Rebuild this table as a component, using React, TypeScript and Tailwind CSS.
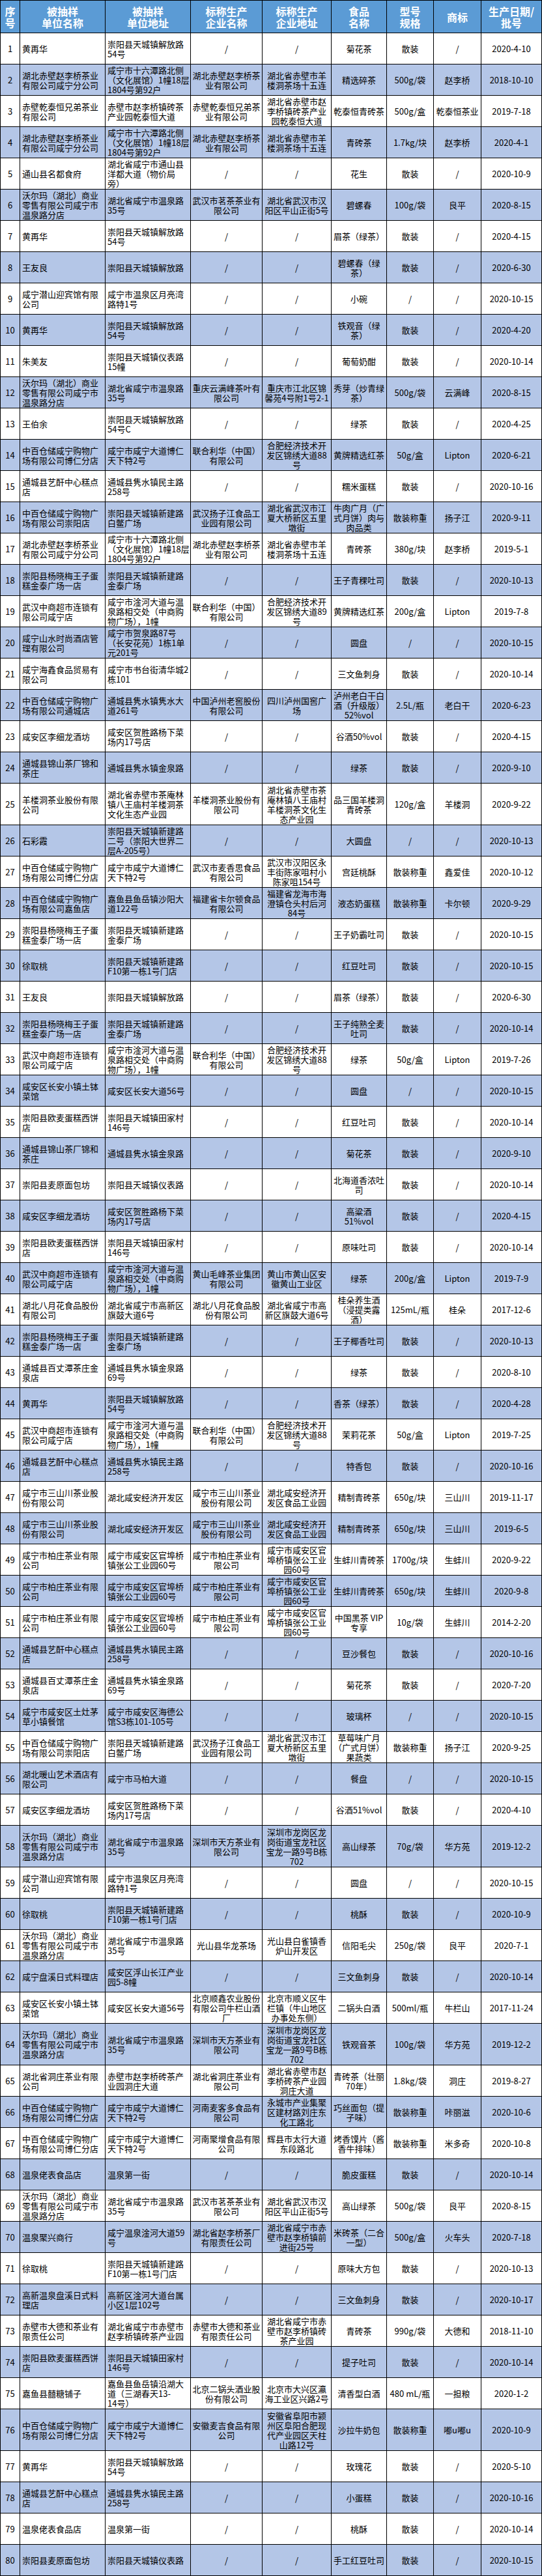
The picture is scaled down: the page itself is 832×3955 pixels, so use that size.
import React from "react";

// 食品抽检结果表：表头 + 80 行，偶数行蓝底
const HEAD = [
  "序~号",
  "被抽样~单位名称",
  "被抽样~单位地址",
  "标称生产~企业名称",
  "标称生产~企业地址",
  "食品~名称",
  "型号~规格",
  "商标",
  "生产日期/~批号",
];

const ROWS = [
  "黄再华|崇阳县天城镇解放路~54号|/|/|菊花茶|散装|/|2020-4-10",
  "湖北赤壁赵李桥茶业~有限公司咸宁分公司|咸宁市十六潭路北侧~（文化展馆）1幢18层~1804号第92户|湖北赤壁赵李桥茶~业有限公司|湖北省赤壁市羊~楼洞茶场十五连|精选碎茶|500g/袋|赵李桥|2018-10-10",
  "赤壁乾泰恒兄弟茶业~有限公司|赤壁市赵李桥镇砖茶~产业园乾泰恒大道|赤壁乾泰恒兄弟茶~业有限公司|湖北省赤壁市赵~李桥镇砖茶产业~园乾泰恒大道|乾泰恒青砖茶|500g/盒|乾泰恒茶业|2019-7-18",
  "湖北赤壁赵李桥茶业~有限公司咸宁分公司|咸宁市十六潭路北侧~（文化展馆）1幢18层~1804号第92户|湖北赤壁赵李桥茶~业有限公司|湖北省赤壁市羊~楼洞茶场十五连|青砖茶|1.7kg/块|赵李桥|2020-4-1",
  "通山县名都食府|湖北省咸宁市通山县~洋都大道（物价局~旁）|/|/|花生|散装|/|2020-10-9",
  "沃尔玛（湖北）商业~零售有限公司咸宁市~温泉路分店|湖北省咸宁市温泉路~35号|武汉市茗茶茶业有~限公司|湖北省武汉市汉~阳区平山正街5号|碧螺春|100g/袋|良平|2020-8-15",
  "黄再华|崇阳县天城镇解放路~54号|/|/|眉茶（绿茶）|散装|/|2020-4-15",
  "王友良|崇阳县天城镇解放路|/|/|碧螺春（绿~茶）|散装|/|2020-6-30",
  "咸宁潜山迎宾馆有限~公司|咸宁市温泉区月亮湾~路特1号|/|/|小碗|/|/|2020-10-15",
  "黄再华|崇阳县天城镇解放路~54号|/|/|铁观音（绿~茶）|散装|/|2020-4-20",
  "朱美友|崇阳县天城镇仪表路~15幢|/|/|葡萄奶酣|散装|/|2020-10-14",
  "沃尔玛（湖北）商业~零售有限公司咸宁市~温泉路分店|湖北省咸宁市温泉路~35号|重庆云满峰茶叶有~限公司|重庆市江北区锦~馨苑4号附1号2-1|秀芽（炒青绿~茶）|500g/袋|云满峰|2020-8-15",
  "王伯余|崇阳县天城镇解放路~54号C|/|/|绿茶|散装|/|2020-4-25",
  "中百仓储咸宁购物广~场有限公司博仁分店|咸宁市咸宁大道博仁~天下特2号|联合利华（中国）~有限公司|合肥经济技术开~发区锦绣大道88~号|黄牌精选红茶|50g/盒|Lipton|2020-6-21",
  "通城县艺酐中心糕点~店|通城县隽水镇民主路~258号|/|/|糯米蛋糕|散装|/|2020-10-16",
  "中百仓储咸宁购物广~场有限公司崇阳店|崇阳县天城镇新建路~白鳖广场|武汉扬子江食品工~业园有限公司|湖北省武汉市江~夏大桥新区五里~墩街|牛肉广月（广~式月饼）肉与~肉品类|散装称重|扬子江|2020-9-11",
  "湖北赤壁赵李桥茶业~有限公司咸宁分公司|咸宁市十六潭路北侧~（文化展馆）1幢18层~1804号第92户|湖北赤壁赵李桥茶~业有限公司|湖北省赤壁市羊~楼洞茶场十五连|青砖茶|380g/块|赵李桥|2019-5-1",
  "崇阳县杨晓梅王子蛋~糕金泰广场一店|崇阳县天城镇新建路~金泰广场|/|/|王子青稞吐司|散装|/|2020-10-13",
  "武汉中商超市连锁有~限公司咸宁店|咸宁市淦河大道与温~泉路相交处（中商购~物广场），1幢|联合利华（中国）~有限公司|合肥经济技术开~发区锦绣大道89~号|黄牌精选红茶|200g/盒|Lipton|2019-7-8",
  "咸宁山水时尚酒店管~理有限公司|咸宁市贺泉路87号~（长安花苑）1栋1单~元201号|/|/|圆盘|/|/|2020-10-15",
  "咸宁海鑫食品贸易有~限公司|咸宁市书台街清华城2~栋101|/|/|三文鱼刺身|散装|/|2020-10-14",
  "中百仓储咸宁购物广~场有限公司通城店|通城县隽水镇隽水大~道261号|中国泸州老窖股份~有限公司|四川泸州国窖广~场|泸州老白干白~酒（升级版）~52%vol|2.5L/瓶|老白干|2020-6-23",
  "咸安区李细龙酒坊|咸安区贺胜路杨下菜~场内17号店|/|/|谷酒50%vol|散装|/|2020-4-15",
  "通城县锦山茶厂锦和~茶庄|通城县隽水镇金泉路|/|/|绿茶|散装|/|2020-9-10",
  "羊楼洞茶业股份有限~公司|湖北省赤壁市茶庵林~镇八王庙村羊楼洞茶~文化生态产业园|羊楼洞茶业股份有~限公司|湖北省赤壁市茶~庵林镇八王庙村~羊楼洞茶文化生~态产业园|品三国羊楼洞~青砖茶|120g/盒|羊楼洞|2020-9-22",
  "石彩霞|崇阳县天城镇新建路~二号（崇阳大世界二~层A-205号）|/|/|大圆盘|/|/|2020-10-13",
  "中百仓储咸宁购物广~场有限公司博仁分店|咸宁市咸宁大道博仁~天下特2号|武汉市麦香思食品~有限公司|武汉市汉阳区永~丰街陈家咀村小~陈家咀154号|宫廷桃酥|散装称重|鑫爱佳|2020-10-12",
  "中百仓储咸宁购物广~场有限公司嘉鱼店|嘉鱼县鱼岳镇沙阳大~道122号|福建省卡尔顿食品~有限公司|福建省龙海市海~澄镇仓头村后河~84号|液态奶蛋糕|散装称重|卡尔顿|2020-9-29",
  "崇阳县杨晓梅王子蛋~糕金泰广场一店|崇阳县天城镇新建路~金泰广场|/|/|王子奶霸吐司|散装|/|2020-10-15",
  "徐取桃|崇阳县天城镇新建路~F10第一栋1号门店|/|/|红豆吐司|散装|/|2020-10-15",
  "王友良|崇阳县天城镇解放路|/|/|眉茶（绿茶）|散装|/|2020-6-30",
  "崇阳县杨晓梅王子蛋~糕金泰广场一店|崇阳县天城镇新建路~金泰广场|/|/|王子纯熟全麦~吐司|散装|/|2020-10-14",
  "武汉中商超市连锁有~限公司咸宁店|咸宁市淦河大道与温~泉路相交处（中商购~物广场），1幢|联合利华（中国）~有限公司|合肥经济技术开~发区锦绣大道88~号|绿茶|50g/盒|Lipton|2019-7-26",
  "咸安区长安小镇土钵~菜馆|咸安区长安大道56号|/|/|圆盘|/|/|2020-10-15",
  "崇阳县欧麦蛋糕西饼~店|崇阳县天城镇田家村~146号|/|/|红豆吐司|散装|/|2020-10-14",
  "通城县锦山茶厂锦和~茶庄|通城县隽水镇金泉路|/|/|菊花茶|散装|/|2020-9-10",
  "崇阳县麦原面包坊|崇阳县天城镇仪表路|/|/|北海道香浓吐~司|散装|/|2020-10-14",
  "咸安区李细龙酒坊|咸安区贺胜路杨下菜~场内17号店|/|/|高粱酒~51%vol|散装|/|2020-4-15",
  "崇阳县欧麦蛋糕西饼~店|崇阳县天城镇田家村~146号|/|/|原味吐司|散装|/|2020-10-14",
  "武汉中商超市连锁有~限公司咸宁店|咸宁市淦河大道与温~泉路相交处（中商购~物广场），1幢|黄山毛峰茶业集团~有限公司|黄山市黄山区安~徽黄山工业区|绿茶|200g/盒|Lipton|2019-7-9",
  "湖北八月花食品股份~有限公司|湖北省咸宁市高新区~旗鼓大道6号|湖北八月花食品股~份有限公司|湖北省咸宁市高~新区旗鼓大道6号|桂朵养生酒~（浸提类露~酒）|125mL/瓶|桂朵|2017-12-6",
  "崇阳县杨晓梅王子蛋~糕金泰广场一店|崇阳县天城镇新建路~金泰广场|/|/|王子椰香吐司|散装|/|2020-10-13",
  "通城县百丈潭茶庄金~泉店|通城县隽水镇金泉路~69号|/|/|绿茶|散装|/|2020-8-10",
  "黄再华|崇阳县天城镇解放路~54号|/|/|香茶（绿茶）|散装|/|2020-4-28",
  "武汉中商超市连锁有~限公司咸宁店|咸宁市淦河大道与温~泉路相交处（中商购~物广场），1幢|联合利华（中国）~有限公司|合肥经济技术开~发区锦绣大道88~号|茉莉花茶|50g/盒|Lipton|2019-7-25",
  "通城县艺酐中心糕点~店|通城县隽水镇民主路~258号|/|/|特香包|散装|/|2020-10-16",
  "咸宁市三山川茶业股~份有限公司|湖北咸安经济开发区|咸宁市三山川茶业~股份有限公司|湖北咸安经济开~发区食品工业园|精制青砖茶|650g/块|三山川|2019-11-17",
  "咸宁市三山川茶业股~份有限公司|湖北咸安经济开发区|咸宁市三山川茶业~股份有限公司|湖北咸安经济开~发区食品工业园|精制青砖茶|650g/块|三山川|2019-6-5",
  "咸宁市柏庄茶业有限~公司|咸宁市咸安区官埠桥~镇张公工业园60号|咸宁市柏庄茶业有~限公司|咸宁市咸安区官~埠桥镇张公工业~园60号|生蚌川青砖茶|1700g/块|生蚌川|2020-9-22",
  "咸宁市柏庄茶业有限~公司|咸宁市咸安区官埠桥~镇张公工业园60号|咸宁市柏庄茶业有~限公司|咸宁市咸安区官~埠桥镇张公工业~园60号|生蚌川青砖茶|650g/块|生蚌川|2020-9-8",
  "咸宁市柏庄茶业有限~公司|咸宁市咸安区官埠桥~镇张公工业园60号|咸宁市柏庄茶业有~限公司|咸宁市咸安区官~埠桥镇张公工业~园60号|中国黑茶 VIP~专享|10g/袋|生蚌川|2014-2-20",
  "通城县艺酐中心糕点~店|通城县隽水镇民主路~258号|/|/|豆沙餐包|散装|/|2020-10-16",
  "通城县百丈潭茶庄金~泉店|通城县隽水镇金泉路~69号|/|/|菊花茶|散装|/|2020-7-20",
  "咸宁市咸安区土灶茅~草小镇餐馆|咸宁市咸安区海德公~馆S3栋101-105号|/|/|玻璃杯|/|/|2020-10-15",
  "中百仓储咸宁购物广~场有限公司崇阳店|崇阳县天城镇新建路~白鳖广场|武汉扬子江食品工~业园有限公司|湖北省武汉市江~夏大桥新区五里~墩街|草莓味广月~（广式月饼）~果蔬类|散装称重|扬子江|2020-9-25",
  "湖北暖山艺术酒店有~限公司|咸宁市马柏大道|/|/|餐盘|/|/|2020-10-15",
  "咸安区李细龙酒坊|咸安区贺胜路杨下菜~场内17号店|/|/|谷酒51%vol|散装|/|2020-4-10",
  "沃尔玛（湖北）商业~零售有限公司咸宁市~温泉路分店|湖北省咸宁市温泉路~35号|深圳市天方茶业有~限公司|深圳市龙岗区龙~岗街道宝龙社区~宝龙一路9号B栋~702|高山绿茶|70g/袋|华方苑|2019-12-2",
  "咸宁潜山迎宾馆有限~公司|咸宁市温泉区月亮湾~路特1号|/|/|圆盘|/|/|2020-10-15",
  "徐取桃|崇阳县天城镇新建路~F10第一栋1号门店|/|/|桃酥|散装|/|2020-10-9",
  "沃尔玛（湖北）商业~零售有限公司咸宁市~温泉路分店|湖北省咸宁市温泉路~35号|光山县华龙茶场|光山县白雀镇香~炉山开发区|信阳毛尖|250g/袋|良平|2020-7-1",
  "咸宁盘溪日式料理店|咸安区浮山长江产业~园5-8幢|/|/|三文鱼刺身|散装|/|2020-10-14",
  "咸安区长安小镇土钵~菜馆|咸安区长安大道56号|北京顺鑫农业股份~有限公司牛栏山酒~厂|北京市顺义区牛~栏镇（牛山地区~办事处东侧）|二锅头白酒|500ml/瓶|牛栏山|2017-11-24",
  "沃尔玛（湖北）商业~零售有限公司咸宁市~温泉路分店|湖北省咸宁市温泉路~35号|深圳市天方茶业有~限公司|深圳市龙岗区龙~岗街道宝龙社区~宝龙一路9号B栋~702|铁观音茶|100g/袋|华方苑|2019-12-2",
  "湖北省洞庄茶业有限~公司|赤壁市赵李桥砖茶产~业园洞庄大道|湖北省洞庄茶业有~限公司|湖北省赤壁市赵~李桥砖茶产业园~洞庄大道|青砖茶（壮丽~70年）|1.8kg/袋|洞庄|2019-8-27",
  "中百仓储咸宁购物广~场有限公司博仁分店|咸宁市咸宁大道博仁~天下特2号|河南麦客多食品有~限公司|永城市产业集聚~区建材路刘庄东~化工路北|巧丝面包（提~子味）|散装称重|咔丽滋|2020-10-6",
  "中百仓储咸宁购物广~场有限公司博仁分店|咸宁市咸宁大道博仁~天下特2号|河南聚增食品有限~公司|辉县市太行大道~东段路北|烤香馍片（酱~香牛排味）|散装称重|米多奇|2020-10-8",
  "温泉佬表食品店|温泉第一街|/|/|脆皮蛋糕|散装|/|2020-10-14",
  "沃尔玛（湖北）商业~零售有限公司咸宁市~温泉路分店|湖北省咸宁市温泉路~35号|武汉市茗茶茶业有~限公司|湖北省武汉市汉~阳区平山正街5号|高山绿茶|500g/袋|良平|2020-8-15",
  "温泉聚兴商行|咸宁温泉淦河大道59~号|湖北省赵李桥茶厂~有限责任公司|湖北省咸宁市赤~壁市赵李桥镇前~进街25号|米砖茶（二合~一型）|500g/盒|火车头|2020-7-18",
  "徐取桃|崇阳县天城镇新建路~F10第一栋1号门店|/|/|原味大方包|散装|/|2020-10-13",
  "高新温泉盘溪日式料~理店|高新区淦河大道台属~小区1层102号|/|/|三文鱼刺身|散装|/|2020-10-17",
  "赤壁市大德和茶业有~限责任公司|湖北省咸宁市赤壁市~赵李桥镇砖茶产业园|赤壁市大德和茶业~有限责任公司|湖北省咸宁市赤~壁市赵李桥镇砖~茶产业园|青砖茶|990g/袋|大德和|2018-11-10",
  "崇阳县欧麦蛋糕西饼~店|崇阳县天城镇田家村~146号|/|/|提子吐司|散装|/|2020-10-14",
  "嘉鱼县囍糖铺子|嘉鱼县鱼岳镇沿湖大~道（三湖春天13-~14号）|北京二锅头酒业股~份有限公司|北京市大兴区瀛~海工业区兴路2号|清香型白酒|480 mL/瓶|一担粮|2020-1-2",
  "中百仓储咸宁购物广~场有限公司博仁分店|咸宁市咸宁大道博仁~天下特2号|安徽麦吉食品有限~公司|安徽省阜阳市颍~州区阜阳合肥现~代产业园区天柱~山路12号|沙拉牛奶包|散装称重|嘟u嘟u|2020-10-9",
  "黄再华|崇阳县天城镇解放路~54号|/|/|玫瑰花|散装|/|2020-5-10",
  "通城县艺酐中心糕点~店|通城县隽水镇民主路~258号|/|/|小蛋糕|散装|/|2020-10-16",
  "温泉佬表食品店|温泉第一街|/|/|桃酥|散装|/|2020-10-14",
  "崇阳县麦原面包坊|崇阳县天城镇仪表路|/|/|手工红豆吐司|散装|/|2020-10-15",
];

const TALL = new Set([25, 58, 64, 76]);

const COLS =
  "grid grid-cols-[30px_131px_131px_110px_106px_85px_72px_73px_93px]";

const br = (s: string) => s.replace(/~/g, "\n");

function Cell(props: { text: string; left?: boolean }) {
  const { text, left } = props;
  return (
    <div
      className={`flex items-center whitespace-pre-line border-r border-b border-black ${
        left ? "justify-start pl-[3px] text-left" : "justify-center text-center"
      }`}
    >
      <span>{br(text)}</span>
    </div>
  );
}

export default function App() {
  return (
    <div
      className="w-[832px] bg-white text-black"
      style={{ fontFamily: '"Noto Sans CJK SC", "Liberation Sans", sans-serif' }}
    >
      <div className="border-t border-l border-black">
        <div className={`${COLS} h-[50px] bg-[#5b9bd5] text-[16px] leading-[18px] font-bold text-white`}>
          {HEAD.map((h) => (
            <div
              key={h}
              className="flex items-center justify-center whitespace-pre-line border-r border-b border-black text-center"
            >
              {br(h)}
            </div>
          ))}
        </div>

        {ROWS.map((row, i) => {
          const n = i + 1;
          const cells = row.split("|");
          return (
            <div
              key={n}
              className={`${COLS} text-[13px] leading-[15px] ${
                TALL.has(n) ? "h-[64px]" : "h-[48px]"
              } ${n % 2 === 0 ? "bg-[#b4c6e7]" : "bg-white"}`}
            >
              <Cell text={String(n)} />
              {cells.map((c, j) => (
                <Cell key={j} text={c} left={j < 2} />
              ))}
            </div>
          );
        })}
      </div>
    </div>
  );
}
